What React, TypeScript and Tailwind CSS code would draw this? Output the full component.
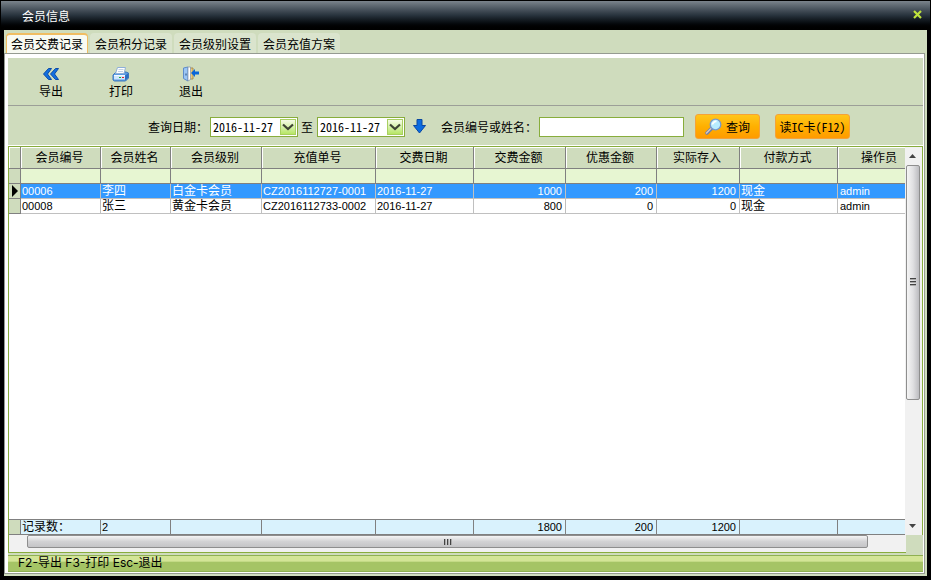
import React, { useState } from "react";
import clsx from "clsx";

interface Payment {
  id: string;
  name: string;
  level: string;
  orderNo: string;
  date: string;
  amount: number;
  discount: number;
  deposit: number;
  method: string;
  operator: string;
}

const tabs = ["会员交费记录", "会员积分记录", "会员级别设置", "会员充值方案"];

const payments: Payment[] = [
  {
    id: "00006",
    name: "李四",
    level: "白金卡会员",
    orderNo: "CZ2016112727-0001",
    date: "2016-11-27",
    amount: 1000,
    discount: 200,
    deposit: 1200,
    method: "现金",
    operator: "admin",
  },
  {
    id: "00008",
    name: "张三",
    level: "黄金卡会员",
    orderNo: "CZ2016112733-0002",
    date: "2016-11-27",
    amount: 800,
    discount: 0,
    deposit: 0,
    method: "现金",
    operator: "admin",
  },
];

const headers = [
  "会员编号",
  "会员姓名",
  "会员级别",
  "充值单号",
  "交费日期",
  "交费金额",
  "优惠金额",
  "实际存入",
  "付款方式",
];

const ExportIcon = () => (
  <svg width="18" height="16" viewBox="0 0 18 16" aria-hidden="true">
    <path
      d="M6.500 2.500h3L5.500 8l4 5.500h-3L1.500 8zM13.500 2.500h3L12.500 8l4 5.500h-3L8.500 8z"
      fill="#1270e0"
      stroke="#0a4aa8"
      strokeWidth="1"
    />
  </svg>
);

const PrintIcon = () => (
  <svg width="18" height="16" viewBox="0 0 18 16" aria-hidden="true">
    <path d="M2 8l2-2h10l2.500 1v5L13.500 15h-11L1 14V9z" fill="#5b9be2" stroke="#3c78be" />
    <path d="M5.500 1.500h8l-1.500 6H3.500z" fill="#fff" stroke="#8fb0d8" />
    <path d="M6.500 3.500h5M6 5.500h5" stroke="#c4d2e4" />
    <path d="M2 9h11v4.500H2z" fill="#cfe6fd" />
    <path d="M2 9h11v1H2z" fill="#f4faff" />
    <path d="M13 9.500l3-2v4.500l-3 2.500z" fill="#2f6fc0" />
    <path d="M7 11h2v1H7z" fill="#18b030" />
    <path d="M10 11h2v1h-2z" fill="#f02020" />
  </svg>
);

const ExitIcon = () => (
  <svg width="18" height="16" viewBox="0 0 18 16" aria-hidden="true">
    <path d="M7.500 2h3.500v11H7.500z" fill="#ecc978" stroke="#a88c50" />
    <path d="M1.500 2L6 1v14l-4.500-2.500z" fill="#9cc6f4" stroke="#5f8ccb" />
    <path d="M6 1h2.500v12.500L6 15z" fill="#fff" stroke="#8090a8" strokeWidth=".7" />
    <path d="M3.500 7.500h1v2h-1z" fill="#284878" />
    <path d="M9 7L13 3v2.500h4v3h-4V11z" fill="#0a66d8" />
  </svg>
);

const SearchIcon = () => (
  <svg width="17" height="17" viewBox="0 0 17 17" aria-hidden="true">
    <path d="M7 10l-5 5" stroke="#6f7fa8" strokeWidth="3.500" strokeLinecap="round" />
    <path d="M6.500 10l-5 5" stroke="#d8c8c0" strokeWidth="1.500" strokeLinecap="round" />
    <circle cx="10.500" cy="6.500" r="5.300" fill="#b8ecff" stroke="#7899cc" strokeWidth="1.300" />
    <path d="M7.500 6.500a3.500 3.500 0 0 1 4-3" stroke="#fff" strokeWidth="1.800" fill="none" />
  </svg>
);

const Cols = () => (
  <colgroup>
    <col className="w-[12px]" />
    <col className="w-[80px]" />
    <col className="w-[70px]" />
    <col className="w-[91px]" />
    <col className="w-[114px]" />
    <col className="w-[98px]" />
    <col className="w-[92px]" />
    <col className="w-[91px]" />
    <col className="w-[83px]" />
    <col className="w-[98px]" />
    <col />
  </colgroup>
);

const DateSelect = ({ label }: { label: string }) => (
  <div className="relative h-5 w-[88px] border border-[#88ad3c] bg-white">
    <select
      aria-label={label}
      className="block h-full w-full appearance-none bg-transparent pl-0.5 text-[12px] leading-4 outline-none"
    >
      <option>2016-11-27</option>
    </select>
    <span className="pointer-events-none absolute top-px right-px flex h-4 w-4 items-center justify-center border border-[#a9cf62] bg-linear-to-b from-[#f6fbe6] to-[#b7e663]">
      <svg width="12" height="8" viewBox="0 0 12 8" aria-hidden="true">
        <path d="M1 1.500l5 4.500 5-4.500" fill="none" stroke="#3e4434" strokeWidth="2.200" />
      </svg>
    </span>
  </div>
);

const ToolButton = ({ icon, label }: { icon: React.ReactNode; label: string }) => (
  <button className="flex w-[70px] flex-col items-center gap-px">
    {icon}
    <span className="leading-4">{label}</span>
  </button>
);

const orangeButton =
  "flex h-[25px] items-center justify-center rounded-[3px] border border-[#f5a238] bg-linear-to-b from-[#ffc61a] via-[#ffb000] to-[#ff9b00]";

const PaymentTable = () => {
  const [selected, setSelected] = useState(0);
  const head =
    "h-[22px] border-r border-b border-[#808080] pt-0 pr-0.5 pb-0.5 pl-0 font-normal leading-4 shadow-[inset_1px_1px_0_#fff]";

  return (
    <table className="w-full table-fixed border-separate border-spacing-0">
      <Cols />
      <thead>
        <tr className="bg-[#cfdcbd]">
          <th className={head}></th>
          {headers.map((h) => (
            <th key={h} className={head}>
              {h}
            </th>
          ))}
          <th className="h-[22px] border-b border-[#808080] pt-0 pr-2 pb-0.5 pl-0 text-right leading-4 font-normal shadow-[inset_1px_1px_0_#fff]">
            操作员
          </th>
        </tr>
      </thead>
      <tbody className="font-['Liberation_Sans','Noto_Sans_CJK_SC',sans-serif]">
        <tr className="bg-[#e7f6d2]">
          <td className="h-[15px] border-r border-b border-[#808080] bg-[#cfdcbd] p-0"></td>
          {headers.map((h) => (
            <td key={h} className="h-[15px] border-r border-b border-[#808080] p-0"></td>
          ))}
          <td className="h-[15px] border-b border-[#808080] p-0"></td>
        </tr>
        {payments.map((p, i) => {
          const text = "h-[15px] border-r border-b border-[#c0c0c0] px-px py-0 leading-[14px] whitespace-nowrap";
          const code =
            "h-[15px] border-r border-b border-[#c0c0c0] px-px py-0 text-[11px] leading-[14px] whitespace-nowrap";
          const num =
            "h-[15px] border-r border-b border-[#c0c0c0] px-[3px] py-0 text-right text-[11px] leading-[14px]";
          return (
            <tr
              key={p.id}
              onClick={() => setSelected(i)}
              className={clsx(i === selected ? "bg-[#3399ff] text-white" : "bg-white text-black")}
            >
              <td className="h-[15px] border-r border-b border-[#808080] bg-[#cfdcbd] p-0">
                {i === selected && (
                  <svg width="11" height="12" viewBox="0 0 11 12" className="block" aria-hidden="true">
                    <path d="M3 0v12l6-6z" fill="#000" />
                  </svg>
                )}
              </td>
              <td className={code}>{p.id}</td>
              <td className={text}>{p.name}</td>
              <td className={text}>{p.level}</td>
              <td className={code}>{p.orderNo}</td>
              <td className={code}>{p.date}</td>
              <td className={num}>{p.amount}</td>
              <td className={num}>{p.discount}</td>
              <td className={num}>{p.deposit}</td>
              <td className={text}>{p.method}</td>
              <td className="h-[15px] border-b border-[#c0c0c0] px-0.5 py-0 text-[11px] leading-[14px]">
                {p.operator}
              </td>
            </tr>
          );
        })}
      </tbody>
    </table>
  );
};

const TotalsTable = () => {
  const text = "h-4 border-y border-r border-[#808080] px-px py-0 leading-[14px] whitespace-nowrap";
  const num = "h-4 border-y border-r border-[#808080] px-[3px] py-0 text-right text-[11px] leading-[14px]";
  return (
    <table className="w-full table-fixed border-separate border-spacing-0 bg-[#d9f2fd] font-['Liberation_Sans','Noto_Sans_CJK_SC',sans-serif]">
      <Cols />
      <tbody>
        <tr>
          <td className="h-4 border-y border-r border-[#808080] bg-[#cfdcbd] p-0"></td>
          <td className={text}>记录数：</td>
          <td className={clsx(text, "text-[11px]")}>{payments.length}</td>
          <td className={text}></td>
          <td className={text}></td>
          <td className={text}></td>
          <td className={num}>1800</td>
          <td className={num}>200</td>
          <td className={num}>1200</td>
          <td className={text}></td>
          <td className="h-4 border-y border-[#808080] p-0"></td>
        </tr>
      </tbody>
    </table>
  );
};

export default function App() {
  const [active, setActive] = useState(0);

  return (
    <div className="flex min-h-screen flex-col bg-black pb-1 font-['Noto_Sans_Mono_CJK_SC','Noto_Sans_CJK_SC',sans-serif] text-[12px] text-black">
      <header className="mx-px flex h-[30px] items-center justify-between border-t border-black bg-linear-to-b from-[#7b848c] via-[#27323c] to-black pr-2 pl-[21px] text-white">
        <h1>会员信息</h1>
        <button aria-label="关闭">
          <svg width="9" height="9" viewBox="0 0 9 9" className="mb-0.5" aria-hidden="true">
            <path d="M1 1l7 7M8 1l-7 7" stroke="#bfe33c" strokeWidth="2.200" />
          </svg>
        </button>
      </header>

      <div className="mx-1 flex flex-1 flex-col bg-[#cfdcbd]">
        <nav className="flex h-[23px] items-end gap-0.5 pl-0.5" role="tablist">
          {tabs.map((tab, i) => (
            <button
              key={tab}
              role="tab"
              aria-selected={i === active}
              onClick={() => setActive(i)}
              className={clsx(
                "h-5 w-[82px] rounded-t-[4px] leading-[18px] whitespace-nowrap",
                i === active
                  ? "border border-t-2 border-b-0 border-[#f0bd62] bg-[#f8faf2]"
                  : "bg-[#dae4cd] pt-px"
              )}
            >
              {tab}
            </button>
          ))}
        </nav>

        <main className="mr-0.5 mb-0.5 flex flex-1 flex-col border border-[#959b91] bg-white pt-1 pr-px pb-px pl-[3px]">
          <div className="flex h-12 items-center border-b border-[#9c9f98] bg-[#cfdcbd] pt-0.5 pl-2">
            <ToolButton icon={<ExportIcon />} label="导出" />
            <ToolButton icon={<PrintIcon />} label="打印" />
            <ToolButton icon={<ExitIcon />} label="退出" />
          </div>

          <form
            className="flex h-10 items-center border-b border-white bg-[#cfdcbd] pt-0.5 pl-[140px] whitespace-nowrap"
            onSubmit={(e) => e.preventDefault()}
          >
            <span className="w-[62px]">查询日期：</span>
            <DateSelect label="开始日期" />
            <span className="pr-1 pl-[3px]">至</span>
            <DateSelect label="结束日期" />
            <button type="button" aria-label="下一天" className="ml-2 w-7">
              <svg width="13" height="15" viewBox="0 0 13 15" aria-hidden="true">
                <path d="M4 .500h5v6h3.500L6.500 14l-6-7.500H4z" fill="#0a6be0" stroke="#0a48a0" />
              </svg>
            </button>
            <label htmlFor="keyword" className="w-[98px]">
              会员编号或姓名：
            </label>
            <input
              id="keyword"
              type="text"
              className="h-5 w-[145px] border border-[#88ad3c] bg-white px-1 outline-none"
            />
            <button type="submit" className={clsx(orangeButton, "ml-[11px] w-[65px] gap-1")}>
              <SearchIcon />
              查询
            </button>
            <button type="button" className={clsx(orangeButton, "ml-[15px] w-[75px]")}>
              读IC卡(F12)
            </button>
          </form>

          <div className="flex flex-1 flex-col bg-[#cfdcbd]">
            <div className="flex flex-1 border-t border-r border-l border-[#88ad3c] bg-white">
              <div className="flex flex-1 flex-col">
                <PaymentTable />
                <div className="flex-1"></div>
                <TotalsTable />
              </div>
              <div className="flex w-[17px] flex-col bg-[#f1f1f1] pr-0.5">
                <div className="flex h-[18px] items-center justify-center">
                  <svg width="7" height="4" viewBox="0 0 7 4" aria-hidden="true">
                    <path d="M0 4l3.500-4L7 4z" fill="#444" />
                  </svg>
                </div>
                <div className="flex-1">
                  <div className="ml-px flex h-2/3 flex-col items-center justify-center gap-px rounded-[2px] border border-[#8e8e8e] bg-linear-to-r from-[#f5f5f5] via-[#e0e0e2] to-[#bcbcc0]">
                    <span className="h-0.5 w-1.5 border-t border-[#444] bg-[#aaa]"></span>
                    <span className="h-0.5 w-1.5 border-t border-[#444] bg-[#aaa]"></span>
                    <span className="h-0.5 w-1.5 border-t border-[#444] bg-[#aaa]"></span>
                  </div>
                </div>
                <div className="flex h-[18px] items-center justify-center">
                  <svg width="7" height="4" viewBox="0 0 7 4" aria-hidden="true">
                    <path d="M0 0l3.500 4L7 0z" fill="#444" />
                  </svg>
                </div>
              </div>
            </div>
            <div className="mr-[17px] h-[18px] border-b border-l border-[#88ad3c] bg-[#f1f1f1] pr-[38px] pl-[18px]">
              <div className="flex h-[13px] items-center justify-center gap-px rounded-[2px] border border-[#8e8e8e] bg-linear-to-b from-[#f5f5f5] via-[#d2d2d4] to-[#c4c4c6]">
                <span className="h-1.5 w-0.5 border-l border-[#444] bg-[#aaa]"></span>
                <span className="h-1.5 w-0.5 border-l border-[#444] bg-[#aaa]"></span>
                <span className="h-1.5 w-0.5 border-l border-[#444] bg-[#aaa]"></span>
              </div>
            </div>
          </div>

          <footer className="border-t-2 border-[#cfdcbd]">
            <p className="h-[17px] border-y border-[#8fb052] bg-linear-to-b from-[#d3e596] from-35% to-[#a5c465] to-40% pl-2.5 font-['Inter','Noto_Sans_CJK_SC',sans-serif] leading-[14px]">
              F2-导出 F3-打印 Esc-退出
            </p>
          </footer>
        </main>
      </div>
    </div>
  );
}
